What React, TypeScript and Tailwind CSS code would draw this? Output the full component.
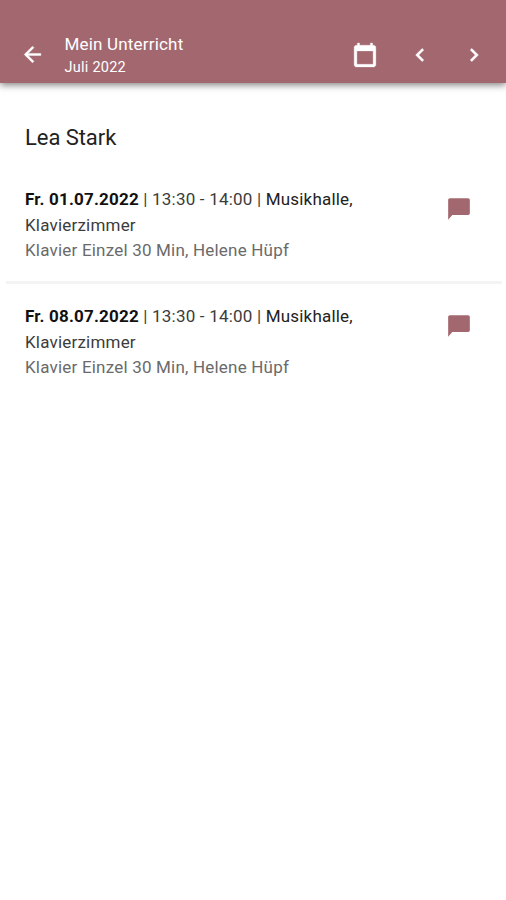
import React from 'react';

type Lesson = { date: string; time: string };

const lessons: Lesson[] = [
  { date: 'Fr. 01.07.2022', time: '13:30 - 14:00' },
  { date: 'Fr. 08.07.2022', time: '13:30 - 14:00' },
];

const icons = {
  back: 'M20 11H7.83l5.59-5.59L12 4l-8 8 8 8 1.41-1.41L7.83 13H20v-2z',
  calendar:
    'M20 3h-1V1h-2v2H7V1H5v2H4c-1.1 0-2 .9-2 2v16c0 1.1.9 2 2 2h16c1.1 0 2-.9 2-2V5c0-1.1-.9-2-2-2zm-.5 17.6h-15V8.2h15v12.4z',
  left: 'M15.41 7.41L14 6l-6 6 6 6 1.41-1.41L10.83 12z',
  right: 'M10 6L8.59 7.41 13.17 12l-4.58 4.59L10 18l6-6z',
  comment: 'M20.4 2H3.6C2.7 2 2 2.7 2 3.6V22l3.8-4.4h14.6c.9 0 1.6-.7 1.6-1.6V3.6c0-.9-.7-1.6-1.6-1.6z',
};

function Icon({ name, className = '' }: { name: keyof typeof icons; className?: string }) {
  return (
    <svg viewBox="0 0 24 24" className={`shrink-0 fill-current ${className}`} strokeLinejoin="round">
      <path d={icons[name]} />
    </svg>
  );
}

function LessonRow({ date, time }: Lesson) {
  return (
    <li className="ml-1.5 mr-1 flex h-[117px] border-b-[3px] border-[#f4f4f4] pl-[19px] pr-[30px] last:border-transparent">
      <div className="w-[360px] pt-5 text-[17px] leading-[25.7px] tracking-[0.2px] text-[#3c3c3c]">
        <p className="whitespace-nowrap">
          <b className="font-bold text-[#111]">{date}</b>
          <span> | {time} | </span>
          <span className="text-[#222]">Musikhalle,</span>
        </p>
        <p>Klavierzimmer</p>
        <p className="text-[#6a6a6a]">Klavier Einzel 30 Min, Helene Hüpf</p>
      </div>
      <button className="ml-auto mt-[29px] h-[26px] text-[#a3686f]" aria-label="Kommentar">
        <Icon name="comment" className="size-[26px]" />
      </button>
    </li>
  );
}

export default function App() {
  return (
    <div className="h-[900px] overflow-hidden bg-white font-['Roboto',sans-serif]">
      <header className="flex h-[83px] items-center bg-[#a3686f] pl-5 pr-[19px] pt-[26px] text-white shadow-[0_2px_7px_rgba(0,0,0,0.5)]">
        <Icon name="back" className="size-[25px] stroke-white stroke-[0.4]" />
        <div className="ml-[19.5px] pt-[2px]">
          <h1 className="text-[17px] leading-[24px] tracking-[0.19px]">Mein Unterricht</h1>
          <p className="text-[14.5px] leading-6 tracking-[0.25px]">Juli 2022</p>
        </div>
        <div className="ml-auto flex items-center">
          <Icon name="calendar" className="mr-[29px] size-[26px] stroke-white stroke-[0.3]" />
          <Icon name="left" className="mr-7 size-[26px] stroke-white stroke-[0.5]" />
          <Icon name="right" className="size-[26px] stroke-white stroke-[0.5]" />
        </div>
      </header>
      <main>
        <h2 className="pl-[25px] pt-[39px] text-[22px] leading-8 tracking-[-0.06px] text-[#222]">Lea Stark</h2>
        <ul className="mt-[13px]">
          {lessons.map((l) => <LessonRow key={l.date} {...l} />)}
        </ul>
      </main>
    </div>
  );
}
